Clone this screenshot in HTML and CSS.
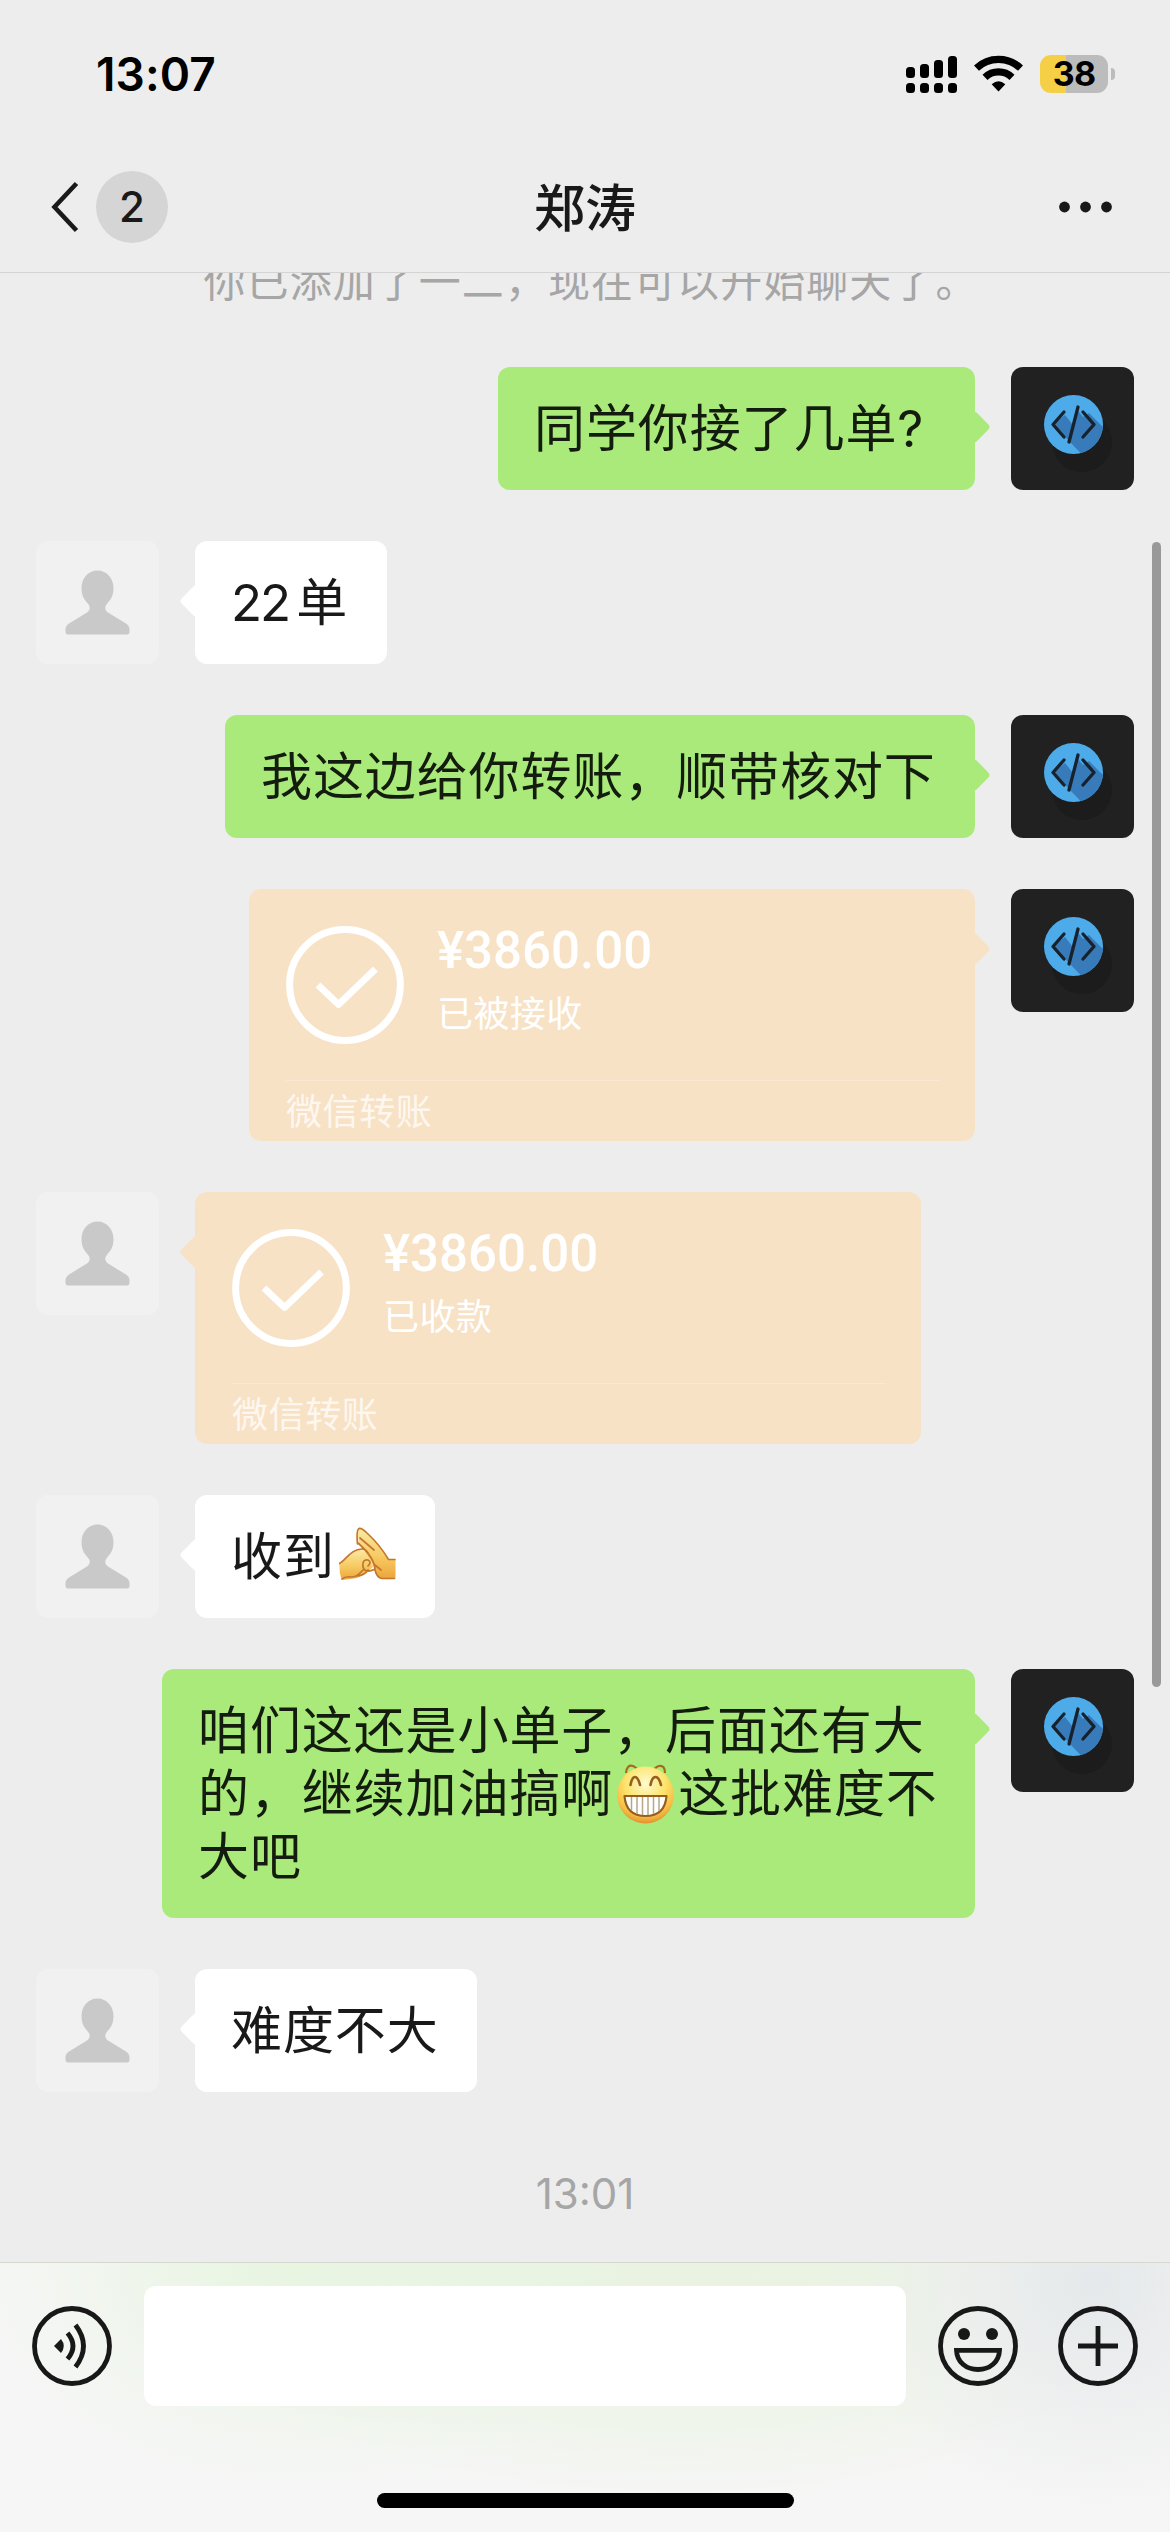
FILE: index.html
```html
<!DOCTYPE html>
<html lang="zh-CN">
<head>
<meta charset="utf-8">
<title>郑涛</title>
<link rel="stylesheet" href="styles.css">
</head>
<body>
<svg class="defs" width="0" height="0" aria-hidden="true">
  <defs>
    <linearGradient id="skin" x1="0" y1="0" x2="0" y2="1">
      <stop offset="0" stop-color="#fbe9a4"/><stop offset=".55" stop-color="#f6cb62"/><stop offset="1" stop-color="#eda53c"/>
    </linearGradient>
    <radialGradient id="face" cx=".5" cy=".3" r=".72">
      <stop offset="0" stop-color="#fffbd0"/><stop offset=".5" stop-color="#fde36a"/><stop offset=".8" stop-color="#f7bd45"/><stop offset="1" stop-color="#e08a2a"/>
    </radialGradient>
    <clipPath id="disc"><circle cx="62.5" cy="57.5" r="29.5"/></clipPath>
    <symbol id="person" viewBox="0 0 123 123">
      <path fill="#c9c9c9" d="M61.5 29.500C52 29.500 45.500 37.500 45.500 47C45.500 56 49 59 52.500 63.500C54.500 66 54 69.500 51 71.500L33 82.500Q29.500 85 29.500 88V90.500Q29.500 93.500 32 93.500H91Q93.500 93.500 93.500 90.500V88Q93.500 85 90 82.500L72 71.500C69 69.500 68.500 66 70.500 63.500C74 59 77.500 56 77.500 47C77.500 37.500 71 29.500 61.500 29.500Z"/>
    </symbol>
    <symbol id="coder" viewBox="0 0 123 123">
      <circle cx="71" cy="75" r="30" fill="#1c1c1c"/>
      <circle cx="62.500" cy="57.500" r="29.500" fill="#4dabea"/>
      <path clip-path="url(#disc)" fill="#387bbb" d="M54 48L62 58L67 44L72 50L78 46L100 68L78 95L42 57Z"/>
      <path fill="none" stroke="#17222c" stroke-width="3.300" stroke-linecap="round" stroke-linejoin="round" d="M53 45L42 57.500L53 70M67 40L58 75M72 45L83 57.500L72 70"/>
    </symbol>
    <symbol id="done" viewBox="0 0 118 118">
      <g fill="none" stroke="#fff"><circle cx="59" cy="59" r="55.400" stroke-width="7"/><path stroke-width="6.800" stroke-linejoin="round" d="M32 59L52.500 78.500L89.500 43"/></g>
    </symbol>
  </defs>
</svg>

<div class="screen">
  <header class="top">
    <div class="status">
      <span class="clock">13:07</span>
      <div class="indicators">
        <svg width="51" height="38" viewBox="0 0 51 38">
          <rect x="0" y="12" width="9" height="11" rx="3.500"/><rect x="14" y="9" width="9" height="14" rx="3.500"/><rect x="28" y="5" width="9" height="18" rx="3.500"/><rect x="42" y="1" width="9" height="22" rx="3.500"/>
          <rect x="0" y="28" width="9" height="10" rx="3.500"/><rect x="14" y="28" width="9" height="10" rx="3.500"/><rect x="28" y="28" width="9" height="10" rx="3.500"/><rect x="42" y="28" width="9" height="10" rx="3.500"/>
        </svg>
        <svg width="49" height="38" viewBox="0 0 49 38">
          <g fill="none" stroke="#000" stroke-width="7.200"><path d="M2.500 13.200A32 32 0 0 1 46.500 13.200"/><path d="M11 22.300A19.500 19.500 0 0 1 38 22.300"/></g>
          <path d="M24.500 36.500L17.700 29.300Q24.500 23 31.300 29.300Z"/>
        </svg>
        <div class="battery"><span class="level">38</span><i class="cap"></i></div>
      </div>
    </div>
    <nav class="nav">
      <div class="back">
        <svg width="28" height="52" viewBox="0 0 28 52"><path fill="none" stroke="#1a1a1a" stroke-width="4.600" d="M25.500 2.500L3.500 26L25.500 49.500"/></svg>
        <span class="unread">2</span>
      </div>
      <h1 class="title">郑涛</h1>
      <svg class="more" width="53" height="12" viewBox="0 0 53 12"><circle cx="5.500" cy="6" r="5.400"/><circle cx="26.500" cy="6" r="5.400"/><circle cx="47.500" cy="6" r="5.400"/></svg>
    </nav>
  </header>

  <main class="chat">
    <p class="notice">你已添加了一二，现在可以开始聊天了。</p>
    <div class="row mine"><div class="bubble w-477">同学你接了几单?</div><svg class="avatar dark"><use href="#coder"/></svg></div>
    <div class="row"><svg class="avatar"><use href="#person"/></svg><div class="bubble w-192"><span class="num">22</span>单</div></div>
    <div class="row mine"><div class="bubble w-750">我这边给你转账，顺带核对下</div><svg class="avatar dark"><use href="#coder"/></svg></div>
    <div class="row mine">
      <div class="bubble transfer">
        <div class="pay"><svg class="check"><use href="#done"/></svg><div><div class="amount">¥3860.00</div><div class="state">已被接收</div></div></div>
        <div class="kind">微信转账</div>
      </div>
      <svg class="avatar dark"><use href="#coder"/></svg>
    </div>
    <div class="row">
      <svg class="avatar"><use href="#person"/></svg>
      <div class="bubble transfer">
        <div class="pay"><svg class="check"><use href="#done"/></svg><div><div class="amount">¥3860.00</div><div class="state">已收款</div></div></div>
        <div class="kind">微信转账</div>
      </div>
    </div>
    <div class="row"><svg class="avatar"><use href="#person"/></svg><div class="bubble w-240">收到<svg class="emoji" viewBox="0 0 57 60">
      <path fill="url(#skin)" d="M.5 37C7 33 12 22 23 22L30 28L34 40L26 47L18 51L3 53Q0 46 .5 37Z"/>
      <path fill="url(#skin)" d="M18.500 6Q18 1 22 1.500Q24 2 28 6Q42 20 49 33H56.500V52H44Q38 52 36 44Q34 34 20 17Z"/>
      <path fill="none" stroke="#c4762f" stroke-width="1.700" stroke-linecap="round" d="M.5 36.500C7 33 12 22 23 22Q27 22 29 26M18.500 17Q17 2 20.500 1.300Q23 1 28 6Q41 18 49.500 32.500H56M19 16Q36 31 36 43Q38 51 43 51.500H55M21 11L35 23M36 42Q26 47 24 40Q23 32 29 33Q33 35 29 39M3 52Q6 49 13 50Q18 50 24 43M17 49Q25 49 29 43M36 38L42 43"/>
    </svg></div></div>
    <div class="row mine"><div class="bubble long">咱们这还是小单子，后面还有大<br>的，继续加油搞啊<svg class="emoji grin" viewBox="0 0 57 60">
      <g fill="none" stroke="#a56a1e" stroke-width="2.200"><path d="M9 9Q10 0 16 2Q21 4 20 9M37 9Q37 3 42 2Q48 1 48 9"/></g>
      <ellipse cx="28.500" cy="31" rx="28.300" ry="28.500" fill="url(#face)"/>
      <g fill="none" stroke="#94601c" stroke-width="2.600" stroke-linecap="round"><path d="M13.500 21Q15 13 18 13Q21 13 23 21M33.500 21Q35 13 38.500 13Q42 13 44 21"/></g>
      <path fill="#fff" stroke="#94601c" stroke-width="2.200" stroke-linejoin="round" d="M7.500 32H49.500Q48 52 28.500 52Q9 52 7.500 32Z"/>
      <path fill="none" stroke="#b9a58a" stroke-width="1.500" d="M14.500 33V46M20 33V50M25.500 33V51M31 33V51M36.500 33V50M42 33V47"/>
    </svg>这批难度不<br>大吧</div><svg class="avatar dark"><use href="#coder"/></svg></div>
    <div class="row"><svg class="avatar"><use href="#person"/></svg><div class="bubble w-282">难度不大</div></div>
    <time class="stamp">13:01</time>
    <i class="scrollbar"></i>
  </main>

  <footer class="composer">
    <div class="tools">
      <svg class="tool" viewBox="0 0 80 80"><g fill="none" stroke="#181818" stroke-width="4.800"><circle cx="40" cy="40" r="37.500"/><path d="M35.500 27Q46.500 40 35.500 53M43.500 19Q59.500 40 43.500 61"/></g><path fill="#181818" d="M22 40L29 33Q34.500 40 29 47Z"/></svg>
      <div class="field"></div>
      <svg class="tool" viewBox="0 0 80 80"><g fill="none" stroke="#181818" stroke-width="4.800"><circle cx="40" cy="40" r="37.500"/><path d="M18.500 44.300H61.500C61 56 52 63.500 40 63.500C28 63.500 19 56 18.500 44.300Z"/></g><circle cx="26" cy="28" r="6" fill="#181818"/><circle cx="54" cy="28" r="6" fill="#181818"/></svg>
      <svg class="tool" viewBox="0 0 80 80"><g fill="none" stroke="#181818" stroke-width="4.800"><circle cx="40" cy="40" r="37.500"/><path d="M20 40H60M40 20V60"/></g></svg>
    </div>
    <div class="home"></div>
  </footer>
</div>
</body>
</html>
```
FILE: styles.css
```css
* { box-sizing: border-box; }
body { margin: 0; background: #ededed; }
.defs { position: absolute; }
svg { display: block; flex: none; }

.screen {
  width: 1170px;
  height: 2532px;
  display: flex;
  flex-direction: column;
  overflow: hidden;
  background: #ededed;
  color: #191919;
  font-family: Inter, "Noto Sans CJK SC", sans-serif;
}

/* Status bar and navigation */
.top { height: 273px; border-bottom: 1px solid #d4d4d4; flex: none; }
.status {
  height: 144px;
  padding: 4px 55px 0 96px;
  display: flex;
  align-items: center;
  justify-content: space-between;
  color: #000;
}
.clock { font-size: 46px; font-weight: 600; letter-spacing: 0.1px; }
.indicators { display: flex; align-items: center; gap: 17px; }
.battery {
  position: relative;
  width: 68px;
  height: 38px;
  margin-right: 7px;
  border-radius: 11px;
  background: linear-gradient(90deg, #f5cf45 26px, #bcbcbc 26px);
  text-align: center;
}
.level { font-size: 34px; line-height: 38px; font-weight: 700; letter-spacing: -0.8px; }
.cap {
  position: absolute;
  right: -7px;
  top: 13px;
  width: 4px;
  height: 12px;
  border-radius: 0 4px 4px 0;
  background: #bcbcbc;
}
.nav {
  height: 126px;
  padding: 0 58px 0 51px;
  display: grid;
  grid-template-columns: 1fr auto 1fr;
  align-items: center;
}
.back { display: flex; align-items: center; gap: 17px; }
.unread {
  width: 72px;
  height: 72px;
  border-radius: 50%;
  background: #d5d5d5;
  font-size: 42px;
  line-height: 72px;
  font-weight: 500;
  text-align: center;
}
.title { margin: 3px 0 0 7px; font-size: 51px; font-weight: 500; line-height: 72px; }
.more { justify-self: end; fill: #191919; }

/* Conversation */
.chat {
  position: relative;
  flex: 1;
  overflow: hidden;
  display: flex;
  flex-direction: column;
  gap: 51px;
}
.notice {
  margin: -21px 0 -6px 12px;
  height: 70px;
  font-size: 42px;
  line-height: 60px;
  letter-spacing: 1.05px;
  color: #a6a6a6;
  text-align: center;
}
.row { display: flex; align-items: flex-start; gap: 36px; padding: 0 36px; }
.mine { justify-content: flex-end; }
.avatar { width: 123px; height: 123px; border-radius: 12px; background: #f1f1f1; }
.dark { background: #212121; }
.bubble {
  position: relative;
  padding: 30px 36px;
  border-radius: 12px;
  background: #fff;
  font-size: 51px;
  line-height: 63px;
  letter-spacing: 0.9px;
  white-space: nowrap;
}
.bubble::before {
  content: "";
  position: absolute;
  left: -11px;
  top: 48px;
  width: 24px;
  height: 24px;
  border-radius: 4px;
  background: inherit;
  transform: rotate(45deg);
}
.mine .bubble { background: #a9ea7a; color: #131c0e; }
.mine .bubble::before { left: auto; right: -11px; }
.w-192 { width: 192px; }
.w-240 { width: 240px; }
.w-282 { width: 282px; }
.w-477 { width: 477px; }
.w-750 { width: 750px; }
.long { width: 813px; }
.num { letter-spacing: -2px; margin-right: 7px; }
.emoji { display: inline-block; width: 57px; height: 60px; margin: -10px 4px 0 4px; vertical-align: -12px; }

.row .transfer {
  width: 726px;
  height: 252px;
  padding: 37px 35px 0 37px;
  background: #f8e2c6;
  color: #fff;
  letter-spacing: 0;
}
.pay { display: flex; gap: 33px; height: 155px; border-bottom: 1px solid #fae8d3; }
.check { width: 118px; height: 118px; }
.amount { font: 500 51px/50px Roboto, sans-serif; }
.state { font-size: 36px; line-height: 50px; letter-spacing: 0.4px; margin-top: 13px; }
.kind { font-size: 36px; line-height: 50px; letter-spacing: 0.6px; margin-top: 6px; color: rgba(255, 255, 255, .75); }

.stamp { align-self: center; margin-top: 25px; font-size: 42px; line-height: 52px; color: #a6a6a6; letter-spacing: 0; }
.scrollbar {
  position: absolute;
  right: 9px;
  top: 269px;
  width: 9px;
  height: 1145px;
  border-radius: 5px;
  background: #999;
}

/* Input bar */
.composer {
  height: 270px;
  flex: none;
  border-top: 1px solid #d3d8d1;
  display: flex;
  flex-direction: column;
  align-items: center;
  background:
    radial-gradient(ellipse 250px 230px at 1095px 20px, #e5e9eb 0, rgba(236, 237, 238, .8) 50%, rgba(246, 246, 246, 0) 100%),
    radial-gradient(ellipse 330px 230px at 300px 0, #e8f5e1 0, rgba(232, 245, 225, 0) 100%),
    radial-gradient(ellipse 530px 240px at 680px 0, #eaf3e1 0, #ebf4e4 45%, rgba(238, 244, 232, 0) 100%),
    #f6f6f6;
}
.tools { width: 100%; padding: 23px 32px 0; display: flex; align-items: center; gap: 32px; }
.tool { width: 80px; height: 80px; }
.tool:last-child { margin-left: 8px; }
.field { flex: 1; height: 120px; border-radius: 12px; background: #fff; }
.home { width: 417px; height: 15px; margin-top: 87px; border-radius: 8px; background: #000; }
```
